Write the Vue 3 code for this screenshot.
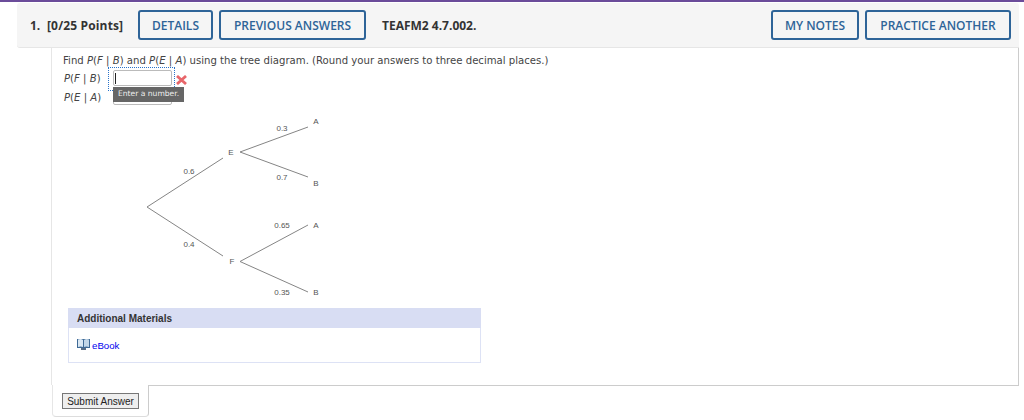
<template>
  <main class="page">
    <div class="topline"></div>
    <section class="question">
      <header class="head">
        <span class="num">1.</span>
        <span class="points">[0/25 Points]</span>
        <button class="btn details">DETAILS</button>
        <button class="btn prev">PREVIOUS ANSWERS</button>
        <span class="code">TEAFM2 4.7.002.</span>
        <span class="grow"></span>
        <button class="btn notes">MY NOTES</button>
        <button class="btn practice">PRACTICE ANOTHER</button>
      </header>

      <div class="body">
        <p class="prompt">Find <i>P</i>(<i>F</i> | <i>B</i>) and <i>P</i>(<i>E</i> | <i>A</i>) using the tree diagram. (Round your answers to three decimal places.)</p>
        <div class="answer first">
          <label><i>P</i>(<i>F</i> | <i>B</i>)</label>
          <div class="field">
            <span class="focus"></span>
            <span class="caret"></span>
            <svg class="wrong" width="11" height="10" viewBox="0 0 11 10">
              <path d="M1 1L10 9M10 1L1 9" stroke="#e8666a" stroke-width="2.8" />
            </svg>
            <div class="tip">Enter a number.</div>
          </div>
        </div>
        <div class="answer">
          <label><i>P</i>(<i>E</i> | <i>A</i>)</label>
          <div class="field"></div>
        </div>

        <svg class="tree" width="240" height="200" viewBox="130 110 240 200">
          <g stroke="#858585" stroke-width="1" fill="none">
            <path d="M223 158L147 207L223 256" />
            <path d="M308 127L240 152L308 177" />
            <path d="M308 225L240 261.5L308 292" />
          </g>
          <g class="lbl" text-anchor="middle">
            <text x="282" y="131">0.3</text>
            <text x="282" y="180">0.7</text>
            <text x="189" y="174">0.6</text>
            <text x="189" y="247">0.4</text>
            <text x="282" y="228">0.65</text>
            <text x="282" y="295">0.35</text>
            <text x="231" y="155">E</text>
            <text x="232" y="264">F</text>
            <text x="316" y="124">A</text>
            <text x="316" y="186">B</text>
            <text x="316" y="228">A</text>
            <text x="316" y="295">B</text>
          </g>
        </svg>

        <div class="materials">
          <div class="mat-head">Additional Materials</div>
          <div class="mat-body">
            <svg class="book" width="13" height="12" viewBox="0 0 13 12">
              <path d="M0 1H13V10H0Z" fill="#3f6a96" />
              <path d="M1 1.5Q4 0.5 6 2V9Q4 8 1 9Z" fill="#dbe8f3" />
              <path d="M12 1.5Q9 0.5 7 2V9Q9 8 12 9Z" fill="#c3d7e8" />
              <path d="M4 10H9V12H4Z" fill="#5b6f86" />
            </svg>
            <a class="ebook">eBook</a>
          </div>
        </div>
      </div>

      <div class="foot">
        <div class="submit-tab">
          <button class="submit">Submit Answer</button>
        </div>
        <div class="foot-rest"></div>
      </div>
    </section>
  </main>
</template>

<script setup>
</script>

<style>
body {
  background: #fff;
}
</style>

<style scoped>
.page {
  width: 1024px;
  height: 420px;
  overflow: hidden;
  background: #fff;
}
.topline {
  height: 2px;
  background: #6b4c9a;
}
.question {
  margin-left: 17px;
  margin-top: 1px;
  width: 1002px;
}
.head {
  display: flex;
  align-items: center;
  height: 45px;
  box-sizing: border-box;
  padding: 0 8px 0 13px;
  background: #f5f5f5;
  border-bottom: 1px solid #e6e6e6;
  border-radius: 3px 3px 0 3px;
  font-family: "Open Sans", sans-serif;
  font-size: 12px;
  font-weight: 600;
  color: #333;
}
.num {
  width: 17px;
  font-weight: 700;
}
.points {
  width: 91px;
  font-weight: 700;
  letter-spacing: 0.15px;
}
.code {
  margin-left: 16px;
  font-weight: 700;
}
.grow {
  flex: 1;
}
.btn {
  height: 30px;
  box-sizing: border-box;
  padding: 0;
  background: transparent;
  border: 2px solid #2e6498;
  border-radius: 3px;
  color: #2e6498;
  font-family: "Open Sans", sans-serif;
  font-size: 12px;
  font-weight: 600;
}
.details {
  width: 75px;
}
.prev {
  width: 147px;
  margin-left: 6px;
}
.notes {
  width: 88px;
}
.practice {
  width: 146px;
  margin-left: 6px;
}
.body {
  margin-left: 34px;
  height: 337px;
  padding: 6px 0 0 11px;
  box-sizing: border-box;
  border-left: 1px solid #e6e6e6;
  border-right: 1px solid #ccc;
  font-family: "DejaVu Sans", sans-serif;
  font-size: 10.15px;
  color: #444;
}
.prompt {
  margin: 0;
  height: 13px;
  line-height: 13px;
}
.answer {
  display: flex;
  align-items: center;
  height: 18px;
  margin-top: 1px;
}
.answer.first {
  margin-top: 2px;
}
.answer label {
  width: 50px;
  padding-left: 1px;
  box-sizing: border-box;
}
.field {
  position: relative;
  width: 59px;
  height: 16px;
  box-sizing: border-box;
  background: #fff;
  border: 1px solid #bbb;
  border-radius: 2px;
}
.focus {
  position: absolute;
  left: -6px;
  top: -4px;
  width: 67px;
  height: 24px;
  box-sizing: border-box;
  border: 1px dotted #2a73c9;
}
.caret {
  position: absolute;
  left: 1px;
  top: 2px;
  width: 1px;
  height: 11px;
  background: #222;
}
.wrong {
  position: absolute;
  left: 62px;
  top: 4px;
}
.tip {
  position: absolute;
  left: -1px;
  top: 16px;
  z-index: 2;
  width: 71px;
  height: 15px;
  line-height: 14px;
  text-align: center;
  background: #666;
  color: #eee;
  font-size: 7.6px;
}
.tree {
  display: block;
  margin: 4px 0 0 67px;
}
.lbl {
  font-family: "Liberation Sans", sans-serif;
  font-size: 8px;
  fill: #555;
}
.materials {
  width: 413px;
  margin: -2px 0 0 5px;
  box-sizing: border-box;
  font-family: "Liberation Sans", sans-serif;
  font-size: 10px;
}
.mat-head {
  height: 20px;
  line-height: 21px;
  padding-left: 9px;
  background: #d8ddf3;
  font-weight: 700;
  color: #333;
}
.mat-body {
  display: flex;
  align-items: center;
  gap: 2px;
  height: 35px;
  padding: 0 0 0 8px;
  box-sizing: border-box;
  border: 1px solid #dde2f5;
  border-top: 0;
}
.book {
  margin-top: -2px;
}
.ebook {
  color: #0000ee;
  font-size: 9.7px;
}
.foot {
  display: flex;
  height: 32px;
  margin-left: 35px;
}
.submit-tab {
  width: 97px;
  box-sizing: border-box;
  padding: 8px 0 0 9px;
  border-left: 1px solid #e6e6e6;
  border-right: 1px solid #ccc;
  border-bottom: 1px solid #ddd;
  border-radius: 0 0 4px 4px;
}
.foot-rest {
  flex: 1;
  border-top: 1px solid #ccc;
}
.submit {
  display: block;
  width: 77px;
  height: 16px;
  padding: 0;
  box-sizing: border-box;
  background: #eee;
  border: 1px solid #777;
  color: #222;
  font-family: "Liberation Sans", sans-serif;
  font-size: 10px;
}
</style>
